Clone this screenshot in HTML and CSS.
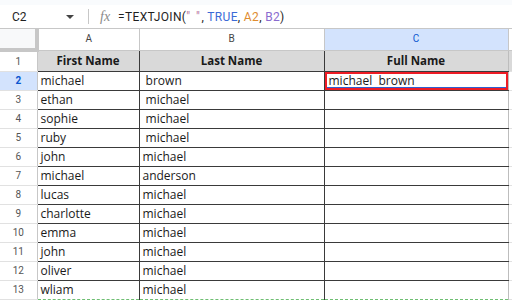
FILE: index.html
```html
<!DOCTYPE html>
<html>
<head>
    <title>TEXTJOIN</title>
    <meta charset="UTF-8">
    <link rel="stylesheet" href="styles.css">
</head>
<body>
    <div class="top-strip"></div>
    <div class="formula-bar">
        <div class="name-box">
            <span>C2</span>
            <span class="caret"></span>
        </div>
        <div class="divider"></div>
        <span class="fx">fx</span>
        <span class="formula">=TEXTJOIN(<span class="str">" "</span>, <span class="bool">TRUE</span>, <span class="ref-a">A2</span>, <span class="ref-b">B2</span>)</span>
    </div>

    <table class="grid">
        <colgroup>
            <col class="c-num">
            <col class="c-a">
            <col class="c-b">
            <col class="c-c">
            <col>
        </colgroup>
        <tr class="col-head">
            <th class="corner"></th>
            <th>A</th>
            <th>B</th>
            <th class="active">C</th>
            <th class="rest"></th>
        </tr>
        <tr class="title-row">
            <td class="num">1</td>
            <td class="title">First Name</td>
            <td class="title">Last Name</td>
            <td class="title last">Full Name</td>
            <td class="rest"></td>
        </tr>
        <tr>
            <td class="num active">2</td>
            <td>michael</td>
            <td>&nbsp;brown</td>
            <td class="last sel">michael&nbsp; brown</td>
            <td class="rest"></td>
        </tr>
        <tr><td class="num">3</td><td>ethan</td><td>&nbsp;michael</td><td class="last"></td><td class="rest"></td></tr>
        <tr><td class="num">4</td><td>sophie</td><td>&nbsp;michael</td><td class="last"></td><td class="rest"></td></tr>
        <tr><td class="num">5</td><td>ruby</td><td>&nbsp;michael</td><td class="last"></td><td class="rest"></td></tr>
        <tr><td class="num">6</td><td>john</td><td>michael</td><td class="last"></td><td class="rest"></td></tr>
        <tr><td class="num">7</td><td>michael</td><td>anderson</td><td class="last"></td><td class="rest"></td></tr>
        <tr><td class="num">8</td><td>lucas</td><td>michael</td><td class="last"></td><td class="rest"></td></tr>
        <tr><td class="num">9</td><td>charlotte</td><td>michael</td><td class="last"></td><td class="rest"></td></tr>
        <tr><td class="num">10</td><td>emma</td><td>michael</td><td class="last"></td><td class="rest"></td></tr>
        <tr><td class="num">11</td><td>john</td><td>michael</td><td class="last"></td><td class="rest"></td></tr>
        <tr><td class="num">12</td><td>oliver</td><td>michael</td><td class="last"></td><td class="rest"></td></tr>
        <tr class="copied"><td class="num">13</td><td>wliam</td><td>michael</td><td class="last"></td><td class="rest"></td></tr>
    </table>
</body>
</html>
```

FILE: styles.css
```css
body {
    margin: 0;
    background-color: white;
    font-family: 'Open Sans', 'Noto Sans', Arial, sans-serif;
    color: #1a1a1a;
    overflow: hidden;
}
.top-strip {
    height: 5px;
    background-color: #f9fbfd;
}
.formula-bar {
    height: 23px;
    display: flex;
    align-items: center;
    border-bottom: 1px solid #c7c7c7;
    font-family: Roboto, Arial, sans-serif;
    font-size: 11px;
    color: #1f1f1f;
}
.name-box {
    width: 80px;
    padding-left: 12px;
    box-sizing: border-box;
    display: flex;
    align-items: center;
    justify-content: space-between;
    padding-right: 6px;
    font-size: 12px;
}
.caret {
    width: 0;
    height: 0;
    border-left: 4px solid transparent;
    border-right: 4px solid transparent;
    border-top: 4px solid #444;
}
.divider {
    width: 1px;
    height: 15px;
    background-color: #c7c7c7;
    margin-left: 8px;
    margin-right: 11px;
}
.fx {
    font-family: 'Liberation Serif', serif;
    font-style: italic;
    color: #8a8a8a;
    font-size: 14px;
    margin-right: 8px;
}
.formula {
    font-size: 12px;
    letter-spacing: 0.35px;
}
.str { color: #b5739d; letter-spacing: 1.5px; }
.bool { color: #3c6ad6; }
.ref-a { color: #e08c2f; }
.ref-b { color: #8a6bcf; }

.grid {
    border-collapse: collapse;
    table-layout: fixed;
    width: 520px;
}
.c-num { width: 37px; }
.c-a { width: 102px; }
.c-b { width: 185px; }
.c-c { width: 184px; }
.grid td, .grid th {
    padding: 0 0 0 3px;
    white-space: nowrap;
    overflow: hidden;
    font-size: 12px;
    line-height: 16px;
    height: 18px;
    border-bottom: 1px solid #3a3a3a;
    border-right: 1px solid #3a3a3a;
}
.col-head th {
    height: 19px;
    padding: 0;
    font-family: Roboto, Arial, sans-serif;
    font-size: 10px;
    font-weight: normal;
    color: #444;
    text-align: center;
    border-bottom: 1px solid #c7c7c7;
    border-right: 1px solid #c7c7c7;
}
.col-head th.corner {
    background-color: #f8f9fa;
    border-right: 4px solid #c7c7c7;
    border-bottom: 4px solid #c7c7c7;
}
.col-head th.active {
    background-color: #d3e3fd;
    color: #0b57d0;
}
.grid td.num {
    padding: 0;
    text-align: center;
    font-family: Roboto, Arial, sans-serif;
    font-size: 10px;
    color: #555;
    border-bottom: 1px solid #e1e1e1;
    border-right: 1px solid #c7c7c7;
}
.grid td.num.active {
    background-color: #d3e3fd;
    color: #0b57d0;
    font-weight: bold;
}
.title-row td {
    height: 19px;
}
.grid td.title {
    background-color: #d9d9d9;
    font-weight: bold;
    font-size: 11.5px;
    text-align: center;
    padding: 0;
}
.grid td.last {
    border-right: 1px solid #bdbdbd;
}
.grid td.rest {
    border-right: none;
    border-bottom: 1px solid #e1e1e1;
}
.title-row td.rest {
    background-color: #d9d9d9;
}
.grid td.sel {
    padding-left: 4px;
    line-height: 14px;
    box-shadow: inset 0 0 0 2px #ee1c25, inset 2px -3px 0 #2f5fd0;
}
.copied td {
    border-bottom: 1px dashed #6fbf73;
}
.copied td.num, .copied td.rest {
    border-bottom: 1px solid #e1e1e1;
}
```
